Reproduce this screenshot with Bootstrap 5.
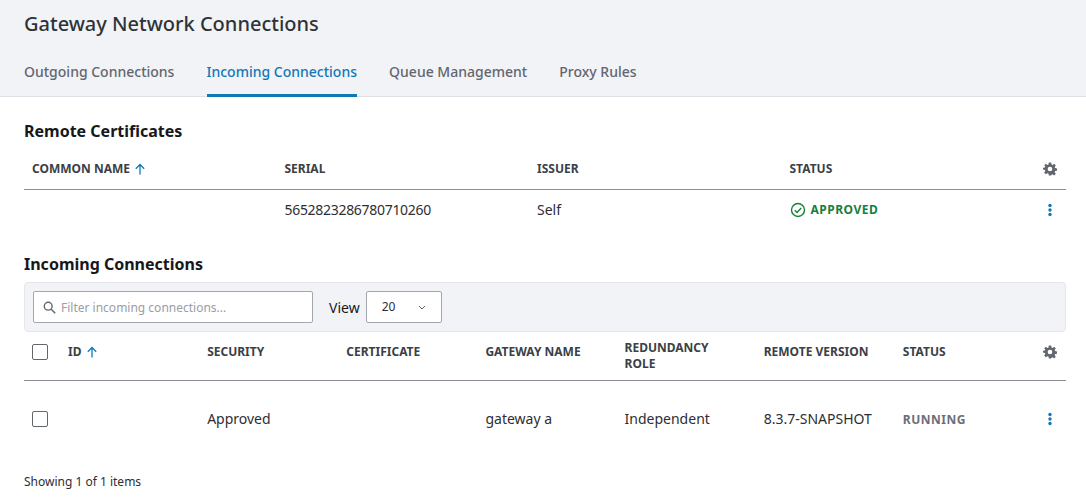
<!DOCTYPE html>
<html lang="en">
<head>
  <meta charset="UTF-8" />
  <title>Gateway Network Connections</title>
  <link href="https://cdn.jsdelivr.net/npm/bootstrap@5.3.0/dist/css/bootstrap.min.css" rel="stylesheet" />
  <style>
    html, body { height: 499px; overflow: hidden; }
    body { font-family: "Noto Sans", sans-serif; font-size: 14px; color: #2e2e33; }
    .page-head { background: #f2f3f7; border-bottom: 1px solid #dfe1e6; height: 97px; padding: 0 24px; }
    .page-title { font-size: 20px; font-weight: 500; line-height: 28px; padding-top: 10px; margin: 0 0 17px; color: #2e3338; }
    .page-tabs { gap: 32.1px; }
    .page-tabs .nav-link { color: #62666e; font-weight: 500; font-size: 14px; padding: 6px 0 0; height: 42px; line-height: 22px; border-bottom: 3px solid transparent; }
    .page-tabs .nav-link.active { color: #1277b5; border-bottom-color: #1277b5; }
    .page-body { padding: 0 20px 0 24px; }
    .sect-title { font-size: 16px; font-weight: 700; line-height: 22px; margin: 0; padding-top: 23px; color: #17181a; }
    .grid-table { table-layout: fixed; width: 100%; margin: 0; }
    .grid-table th, .grid-table td { padding: 0 8px; vertical-align: middle; border: 0; background: transparent; color: #2e2e33; }
    .grid-table th { font-size: 12px; font-weight: 700; line-height: 16px; color: #3b3f46; text-transform: uppercase; border-bottom: 1px solid #8c8e96; }
    .grid-table td { font-size: 14px; }
    .cert-table thead tr { height: 47px; }
    .cert-table th { padding-top: 7px; }
    .cert-table tbody tr { height: 41px; }
    .conn-table thead tr { height: 48px; }
    .conn-table th { padding-bottom: 8px; }
    .conn-table th.two-line { padding-bottom: 0; }
    .conn-table tbody tr { height: 77px; }
    .col-act { width: 32px; }
    .col-chk { width: 36px; }
    .sort-up { color: #1277b5; margin-left: 1px; vertical-align: -2px; }
    .serial-no { letter-spacing: -.3px; }
    .state-ok { font-size: 12px; font-weight: 700; color: #15803d; letter-spacing: .5px; gap: 5px; }
    .state-run { font-size: 12px; font-weight: 700; color: #6b6f78; letter-spacing: .5px; }
    .gear { color: #62666e; display: block; margin-left: auto; margin-right: 1px; }
    .dots { color: #1277b5; display: block; margin-left: auto; margin-right: 1px; }
    .tool-bar { background: #f2f3f7; border: 1px solid #e4e6eb; border-radius: 4px; height: 50px; padding: 0 8px; margin-top: 7px; }
    .filter-box { width: 280px; height: 32px; background: #fff; border: 1px solid #a3a6ad; border-radius: 2px; padding: 0 9px; gap: 5px; }
    .filter-box input { border: 0; outline: 0; padding: 2px 0 0; flex: 1; font-size: 12px; background: transparent; min-width: 0; }
    .filter-box input::placeholder { color: #9a9da5; opacity: 1; }
    .view-label { margin-left: 16px; margin-right: 6px; padding-top: 1px; color: #17181a; }
    .view-pick { width: 76px; height: 32px; background: #fff; border: 1px solid #a3a6ad; border-radius: 2px; padding: 0 15px; font-size: 12px; }
    .chk-box { width: 16px; height: 16px; border: 1px solid #62666e; border-radius: 2px; background: #fff; margin: 0; display: block; appearance: none; }
    .foot-note { font-size: 12px; line-height: 16px; margin-top: 17px; color: #2e2e33; }
  </style>
</head>
<body>

  <div class="page-head">
    <h1 class="page-title">Gateway Network Connections</h1>
    <ul class="nav page-tabs">
      <li class="nav-item"><a class="nav-link" href="#">Outgoing Connections</a></li>
      <li class="nav-item"><a class="nav-link active" href="#">Incoming Connections</a></li>
      <li class="nav-item"><a class="nav-link" href="#">Queue Management</a></li>
      <li class="nav-item"><a class="nav-link" href="#">Proxy Rules</a></li>
    </ul>
  </div>

  <div class="page-body">
    <h2 class="sect-title">Remote Certificates</h2>
    <table class="table grid-table cert-table">
      <thead>
        <tr>
          <th>Common Name
            <svg class="sort-up" width="12" height="12" viewBox="0 0 12 12" fill="none" stroke="currentColor" stroke-width="1.3"><path d="M6 11.500V1.500M1.800 5.700l4.200-4.200 4.200 4.200"/></svg>
          </th>
          <th>Serial</th>
          <th>Issuer</th>
          <th>Status</th>
          <th class="col-act">
            <svg class="gear" width="14" height="14" viewBox="0 0 24 24" fill="currentColor"><path fill-rule="evenodd" d="M10 1h4l.6 3.200 1.900.8L19.200 3 22 5.800l-2 2.700.8 1.900 3.200.6v4l-3.200.5-.8 2 2 2.700-2.800 2.800-2.700-2-1.900.8L14 23h-4l-.6-3.100-1.900-.8L4.800 21 2 18.200l2-2.700-.8-2L0 13V10l3.200-.6.8-1.900L2 5.800 4.800 3l2.700 2 1.900-.8zM12 8a4 4 0 1 0 0 8 4 4 0 0 0 0-8z"/></svg>
          </th>
        </tr>
      </thead>
      <tbody>
        <tr>
          <td></td>
          <td><span class="serial-no">5652823286780710260</span></td>
          <td>Self</td>
          <td>
            <div class="state-ok d-flex align-items-center">
              <svg width="16" height="16" viewBox="0 0 16 16" fill="none" stroke="currentColor" stroke-width="1.400"><circle cx="8" cy="8" r="6.500"/><path d="M4.800 8.200l2.200 2.200 4.200-4.400"/></svg>
              APPROVED
            </div>
          </td>
          <td>
            <svg class="dots" width="14" height="14" viewBox="0 0 14 14" fill="currentColor"><circle cx="7" cy="2.500" r="1.700"/><circle cx="7" cy="7" r="1.700"/><circle cx="7" cy="11.500" r="1.700"/></svg>
          </td>
        </tr>
      </tbody>
    </table>

    <h2 class="sect-title">Incoming Connections</h2>
    <div class="tool-bar d-flex align-items-center">
      <div class="filter-box d-flex align-items-center">
        <svg width="13" height="13" viewBox="0 0 13 13" fill="none" stroke="#62666e" stroke-width="1.400"><circle cx="5.200" cy="5.200" r="3.900"/><path d="M8.200 8.200l4 4"/></svg>
        <input type="text" placeholder="Filter incoming connections..." />
      </div>
      <span class="view-label">View</span>
      <div class="view-pick d-flex align-items-center justify-content-between">
        <span>20</span>
        <svg width="8" height="5" viewBox="0 0 8 5" fill="none" stroke="#62666e" stroke-width="1"><path d="M1 1l3 3 3-3"/></svg>
      </div>
    </div>
    <table class="table grid-table conn-table">
      <thead>
        <tr>
          <th class="col-chk"><input class="chk-box" type="checkbox" /></th>
          <th>ID
            <svg class="sort-up" width="12" height="12" viewBox="0 0 12 12" fill="none" stroke="currentColor" stroke-width="1.3"><path d="M6 11.500V1.500M1.800 5.700l4.200-4.200 4.200 4.200"/></svg>
          </th>
          <th>Security</th>
          <th>Certificate</th>
          <th>Gateway Name</th>
          <th class="two-line">Redundancy<br />Role</th>
          <th>Remote Version</th>
          <th>Status</th>
          <th class="col-act">
            <svg class="gear" width="14" height="14" viewBox="0 0 24 24" fill="currentColor"><path fill-rule="evenodd" d="M10 1h4l.6 3.200 1.900.8L19.200 3 22 5.800l-2 2.700.8 1.900 3.200.6v4l-3.200.5-.8 2 2 2.700-2.800 2.800-2.700-2-1.900.8L14 23h-4l-.6-3.100-1.900-.8L4.800 21 2 18.200l2-2.700-.8-2L0 13V10l3.200-.6.8-1.900L2 5.800 4.800 3l2.700 2 1.900-.8zM12 8a4 4 0 1 0 0 8 4 4 0 0 0 0-8z"/></svg>
          </th>
        </tr>
      </thead>
      <tbody>
        <tr>
          <td><input class="chk-box" type="checkbox" /></td>
          <td></td>
          <td>Approved</td>
          <td></td>
          <td>gateway a</td>
          <td>Independent</td>
          <td>8.3.7-SNAPSHOT</td>
          <td><span class="state-run">RUNNING</span></td>
          <td>
            <svg class="dots" width="14" height="14" viewBox="0 0 14 14" fill="currentColor"><circle cx="7" cy="2.500" r="1.700"/><circle cx="7" cy="7" r="1.700"/><circle cx="7" cy="11.500" r="1.700"/></svg>
          </td>
        </tr>
      </tbody>
    </table>
    <div class="foot-note">Showing 1 of 1 items</div>
  </div>

</body>
</html>
